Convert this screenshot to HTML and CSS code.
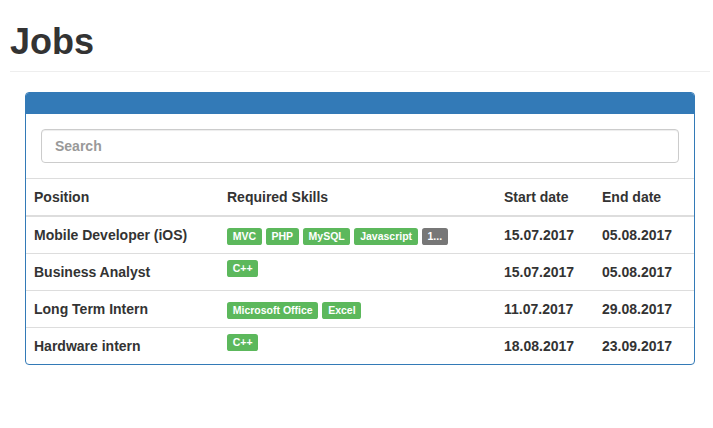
FILE: index.html
```html
<!DOCTYPE html>
<html>
<head>
<meta charset="utf-8">
<link rel="stylesheet" href="styles.css">
</head>
<body>
<div class="page">
  <div class="page-header"><h1>Jobs</h1></div>
  <div class="panel">
    <div class="panel-heading"></div>
    <div class="panel-body">
      <input class="search" type="text" placeholder="Search">
    </div>
    <table class="jobs">
      <colgroup>
        <col class="c-pos"><col class="c-skills"><col class="c-start"><col class="c-end">
      </colgroup>
      <thead>
        <tr><th>Position</th><th>Required Skills</th><th>Start date</th><th>End date</th></tr>
      </thead>
      <tbody>
        <tr>
          <td>Mobile Developer (iOS)</td>
          <td><span class="label">MVC</span> <span class="label">PHP</span> <span class="label">MySQL</span> <span class="label">Javascript</span> <span class="label label-more">1...</span></td>
          <td>15.07.2017</td><td>05.08.2017</td>
        </tr>
        <tr>
          <td>Business Analyst</td>
          <td class="skills-single"><span class="label">C++</span></td>
          <td>15.07.2017</td><td>05.08.2017</td>
        </tr>
        <tr>
          <td>Long Term Intern</td>
          <td><span class="label">Microsoft Office</span> <span class="label">Excel</span></td>
          <td>11.07.2017</td><td>29.08.2017</td>
        </tr>
        <tr>
          <td>Hardware intern</td>
          <td class="skills-single"><span class="label">C++</span></td>
          <td>18.08.2017</td><td>23.09.2017</td>
        </tr>
      </tbody>
    </table>
  </div>
</div>
</body>
</html>
```
FILE: styles.css
```css
* { box-sizing: border-box; }
html, body { margin: 0; padding: 0; background: #fff; }
body {
  font-family: "Liberation Sans", Arial, Helvetica, sans-serif;
  font-size: 14px;
  line-height: 20px;
  color: #333;
}
.page { padding: 0 3px 0 10px; }
.page-header {
  padding-top: 22px;
  padding-bottom: 9px;
  border-bottom: 1px solid #eee;
}
.page-header h1 {
  margin: 0;
  font-size: 36px;
  line-height: 39.6px;
  font-weight: bold;
  color: #333;
}
.panel {
  margin: 20px 15px;
  border: 1px solid #337ab7;
  border-radius: 4px;
  overflow: hidden;
}
.panel-heading {
  height: 21px;
  background: #337ab7;
}
.panel-body { padding: 15px; }
.search {
  display: block;
  width: 100%;
  height: 34px;
  padding: 6px 13px;
  border: 1px solid #ccc;
  border-radius: 4px;
  box-shadow: inset 0 1px 1px rgba(0,0,0,.075);
  font-family: inherit;
  font-size: 14px;
  font-weight: bold;
  color: #555;
  outline: none;
}
.search::placeholder { color: #999; font-weight: bold; }
.jobs {
  width: 100%;
  border-collapse: collapse;
  border-spacing: 0;
}
.c-pos { width: 193px; }
.c-skills { width: 277px; }
.c-start { width: 98px; }
.c-end { width: 100px; }
.jobs th, .jobs td {
  padding: 8px;
  text-align: left;
  vertical-align: top;
  font-weight: bold;
  border-top: 1px solid #ddd;
  white-space: nowrap;
}
.jobs thead th { border-bottom: 2px solid #ddd; }
.jobs tbody tr:first-child td { border-top: 0; }
.jobs td.skills-single { padding-top: 3px; padding-bottom: 13px; }
.label {
  display: inline;
  padding: .2em .55em .3em;
  font-size: 10.5px;
  font-weight: bold;
  line-height: 1;
  color: #fff;
  background: #5cb85c;
  border-radius: .25em;
  white-space: nowrap;
  vertical-align: baseline;
}
.label-more { background: #777; }
```
